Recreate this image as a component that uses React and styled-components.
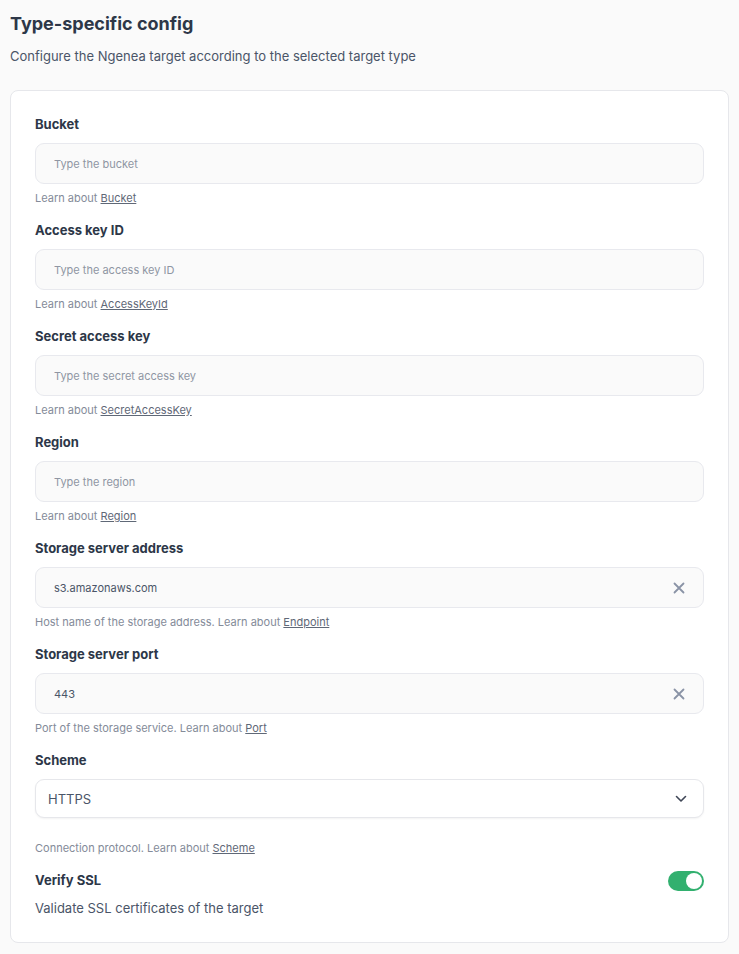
import React, { useState } from "react";
import styled, { createGlobalStyle } from "styled-components";

const GlobalStyle = createGlobalStyle`
  body {
    margin: 0;
    background: #fafafa;
    font-family: Inter, "Noto Sans", sans-serif;
    color: #2d3748;
  }
`;

const fields = [
  { label: "Bucket", placeholder: "Type the bucket", link: "Bucket" },
  { label: "Access key ID", placeholder: "Type the access key ID", link: "AccessKeyId" },
  { label: "Secret access key", placeholder: "Type the secret access key", link: "SecretAccessKey" },
  { label: "Region", placeholder: "Type the region", link: "Region" },
  {
    label: "Storage server address",
    value: "s3.amazonaws.com",
    hint: "Host name of the storage address. ",
    link: "Endpoint",
  },
  {
    label: "Storage server port",
    value: "443",
    hint: "Port of the storage service. ",
    link: "Port",
  },
];

export default function App() {
  const [values, setValues] = useState(
    fields.map((f) => f.value || "")
  );
  const [verify, setVerify] = useState(true);

  const setValue = (i, v) => {
    const next = [...values];
    next[i] = v;
    setValues(next);
  };

  return (
    <Page>
      <GlobalStyle />
      <Title>Type-specific config</Title>
      <Subtitle>
        Configure the Ngenea target according to the selected target type
      </Subtitle>
      <Card>
        {fields.map((f, i) => (
          <Field key={f.label}>
            <Label>{f.label}</Label>
            <InputWrap>
              <Input
                placeholder={f.placeholder}
                value={values[i]}
                onChange={(e) => setValue(i, e.target.value)}
              />
              {values[i] !== "" && (
                <ClearButton onClick={() => setValue(i, "")}>
                  <svg width="12" height="12" viewBox="0 0 12 12">
                    <path
                      d="M1.5 1.5l9 9M10.5 1.5l-9 9"
                      stroke="#8a93a6"
                      strokeWidth="1.8"
                      strokeLinecap="round"
                    />
                  </svg>
                </ClearButton>
              )}
            </InputWrap>
            <Hint>
              {f.hint}Learn about <a href="#">{f.link}</a>
            </Hint>
          </Field>
        ))}
        <Field>
          <Label>Scheme</Label>
          <Select>
            <span>HTTPS</span>
            <svg width="12" height="8" viewBox="0 0 12 8">
              <path
                d="M1.5 1.5l4.5 4.5 4.5-4.5"
                fill="none"
                stroke="#3f4656"
                strokeWidth="1.6"
                strokeLinecap="round"
                strokeLinejoin="round"
              />
            </svg>
          </Select>
          <Hint $spaced>
            Connection protocol. Learn about <a href="#">Scheme</a>
          </Hint>
        </Field>
        <SwitchRow>
          <div>
            <Label>Verify SSL</Label>
            <Description>Validate SSL certificates of the target</Description>
          </div>
          <Switch $on={verify} onClick={() => setVerify(!verify)}>
            <Knob $on={verify} />
          </Switch>
        </SwitchRow>
      </Card>
    </Page>
  );
}

const Page = styled.div`
  padding: 12px 10px 12px;
`;

const Title = styled.h1`
  margin: 0;
  font-size: 18px;
  line-height: 24px;
  font-weight: 700;
  color: #2d3748;
`;

const Subtitle = styled.p`
  margin: 10px 0 0;
  font-size: 13px;
  line-height: 20px;
  color: #4a5568;
`;

const Card = styled.div`
  margin-top: 24px;
  background: #fff;
  border: 1px solid #e6e7eb;
  border-radius: 8px;
  padding: 23px 24px 24px;
  display: flex;
  flex-direction: column;
  gap: 12px;
`;

const Field = styled.div`
  display: flex;
  flex-direction: column;
`;

const Label = styled.div`
  font-size: 13px;
  line-height: 20px;
  font-weight: 700;
  color: #2d3748;
`;

const InputWrap = styled.div`
  margin-top: 9px;
  height: 41px;
  box-sizing: border-box;
  display: flex;
  align-items: center;
  background: #fafafa;
  border: 1px solid #e8e9ee;
  border-radius: 9px;
  padding: 0 18px;
`;

const Input = styled.input`
  flex: 1;
  border: none;
  outline: none;
  background: transparent;
  font-family: inherit;
  font-size: 11px;
  color: #4a5568;
  padding: 0;

  &::placeholder {
    color: #8f96a3;
  }
`;

const ClearButton = styled.button`
  border: none;
  background: none;
  padding: 0;
  display: flex;
  cursor: pointer;
`;

const Hint = styled.div`
  margin-top: ${(p) => (p.$spaced ? "20px" : "4px")};
  font-size: 11px;
  line-height: 20px;
  color: #848b99;

  a {
    color: #5f6877;
    text-decoration: underline;
  }
`;

const Select = styled.div`
  margin-top: 9px;
  height: 39px;
  box-sizing: border-box;
  display: flex;
  align-items: center;
  justify-content: space-between;
  background: #fff;
  border: 1px solid #e6e7eb;
  border-radius: 9px;
  box-shadow: 0 1px 2px rgba(0, 0, 0, 0.05);
  padding: 0 16px 0 12px;
  font-size: 13px;
  color: #4a5568;
`;

const SwitchRow = styled.div`
  display: flex;
  justify-content: space-between;
  align-items: flex-start;
`;

const Description = styled.div`
  margin-top: 8px;
  font-size: 13px;
  line-height: 20px;
  color: #4a5568;
`;

const Switch = styled.div`
  width: 36px;
  height: 20px;
  margin-top: 1px;
  border-radius: 10px;
  background: ${(p) => (p.$on ? "#32b06f" : "#cbd5e0")};
  display: flex;
  align-items: center;
  justify-content: ${(p) => (p.$on ? "flex-end" : "flex-start")};
  padding: 2px;
  box-sizing: border-box;
  cursor: pointer;
`;

const Knob = styled.div`
  width: 16px;
  height: 16px;
  border-radius: 50%;
  background: #fff;
`;
